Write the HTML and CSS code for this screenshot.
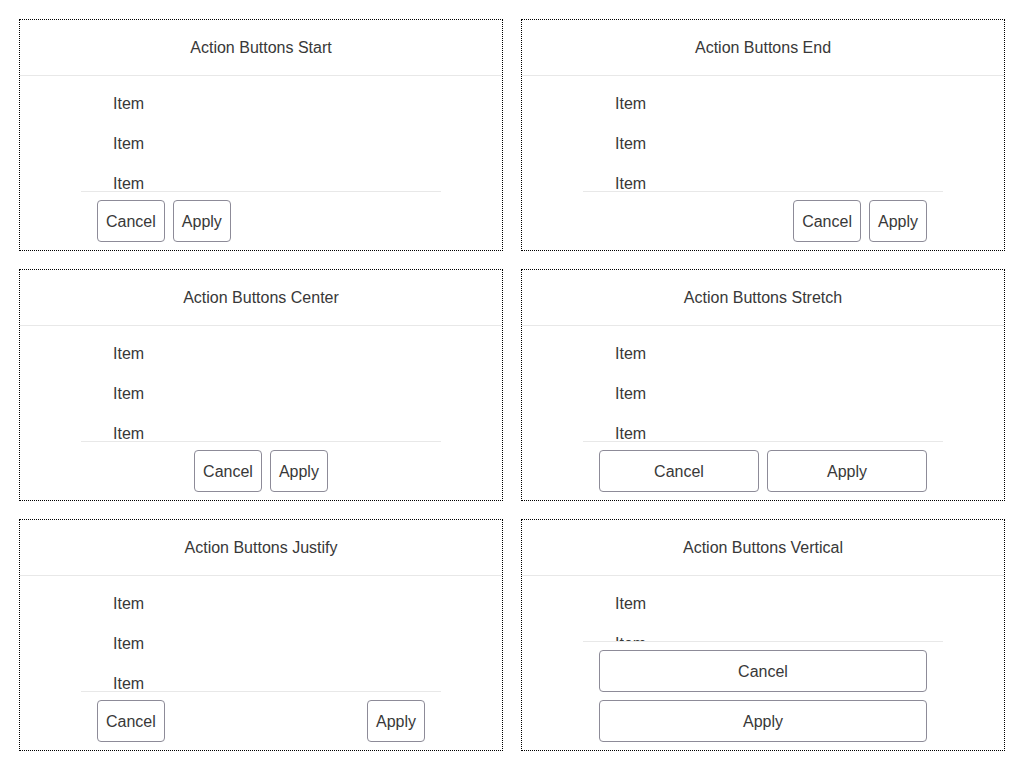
FILE: index.html
```html
<!DOCTYPE html>
<html>
<head>
<meta charset="utf-8">
<link rel="stylesheet" href="styles.css">
</head>
<body>
<div class="grid">
  <div class="card">
    <div class="card-header">Action Buttons Start</div>
    <div class="content">
      <div class="list"><div class="item">Item</div><div class="item">Item</div><div class="item">Item</div></div>
      <div class="actions start"><button class="btn">Cancel</button><button class="btn">Apply</button></div>
    </div>
  </div>
  <div class="card">
    <div class="card-header">Action Buttons End</div>
    <div class="content">
      <div class="list"><div class="item">Item</div><div class="item">Item</div><div class="item">Item</div></div>
      <div class="actions end"><button class="btn">Cancel</button><button class="btn">Apply</button></div>
    </div>
  </div>
  <div class="card">
    <div class="card-header">Action Buttons Center</div>
    <div class="content">
      <div class="list"><div class="item">Item</div><div class="item">Item</div><div class="item">Item</div></div>
      <div class="actions center"><button class="btn">Cancel</button><button class="btn">Apply</button></div>
    </div>
  </div>
  <div class="card">
    <div class="card-header">Action Buttons Stretch</div>
    <div class="content">
      <div class="list"><div class="item">Item</div><div class="item">Item</div><div class="item">Item</div></div>
      <div class="actions stretch"><button class="btn">Cancel</button><button class="btn">Apply</button></div>
    </div>
  </div>
  <div class="card">
    <div class="card-header">Action Buttons Justify</div>
    <div class="content">
      <div class="list"><div class="item">Item</div><div class="item">Item</div><div class="item">Item</div></div>
      <div class="actions justify"><button class="btn">Cancel</button><button class="btn">Apply</button></div>
    </div>
  </div>
  <div class="card">
    <div class="card-header">Action Buttons Vertical</div>
    <div class="content">
      <div class="list"><div class="item">Item</div><div class="item">Item</div><div class="item">Item</div></div>
      <div class="actions vertical"><button class="btn">Cancel</button><button class="btn">Apply</button></div>
    </div>
  </div>
</div>
</body>
</html>
```
FILE: styles.css
```css
html, body {
  margin: 0;
  padding: 0;
  background: #fff;
}
body {
  font-family: "Liberation Sans", Arial, sans-serif;
  font-size: 16px;
  color: #383838;
}
.grid {
  display: grid;
  grid-template-columns: 484px 484px;
  grid-auto-rows: 232px;
  gap: 18px;
  padding: 19px;
}
.card {
  box-sizing: border-box;
  border: 1px dotted #000;
  display: flex;
  flex-direction: column;
  overflow: hidden;
}
.card-header {
  height: 55px;
  flex: none;
  line-height: 55px;
  text-align: center;
  border-bottom: 1px solid #e8e8e8;
}
.content {
  flex: 1;
  min-height: 0;
  width: 360px;
  align-self: center;
  display: flex;
  flex-direction: column;
}
.list {
  flex: 1;
  min-height: 0;
  overflow: hidden;
  padding-top: 8px;
}
.item {
  height: 40px;
  line-height: 40px;
  padding-left: 32px;
}
.actions {
  flex: none;
  display: flex;
  gap: 8px;
  padding: 8px 16px;
  border-top: 1px solid #e8e8e8;
}
.actions.start { justify-content: flex-start; }
.actions.end { justify-content: flex-end; }
.actions.center { justify-content: center; }
.actions.justify { justify-content: space-between; }
.actions.stretch .btn { flex: 1; }
.actions.vertical { flex-direction: column; }
.btn {
  box-sizing: border-box;
  height: 42px;
  padding: 2px 8px 0;
  margin: 0;
  border: 1px solid #8d8b98;
  border-radius: 4px;
  background: #fff;
  color: #383838;
  font-family: "Liberation Sans", Arial, sans-serif;
  font-size: 16px;
}
```
